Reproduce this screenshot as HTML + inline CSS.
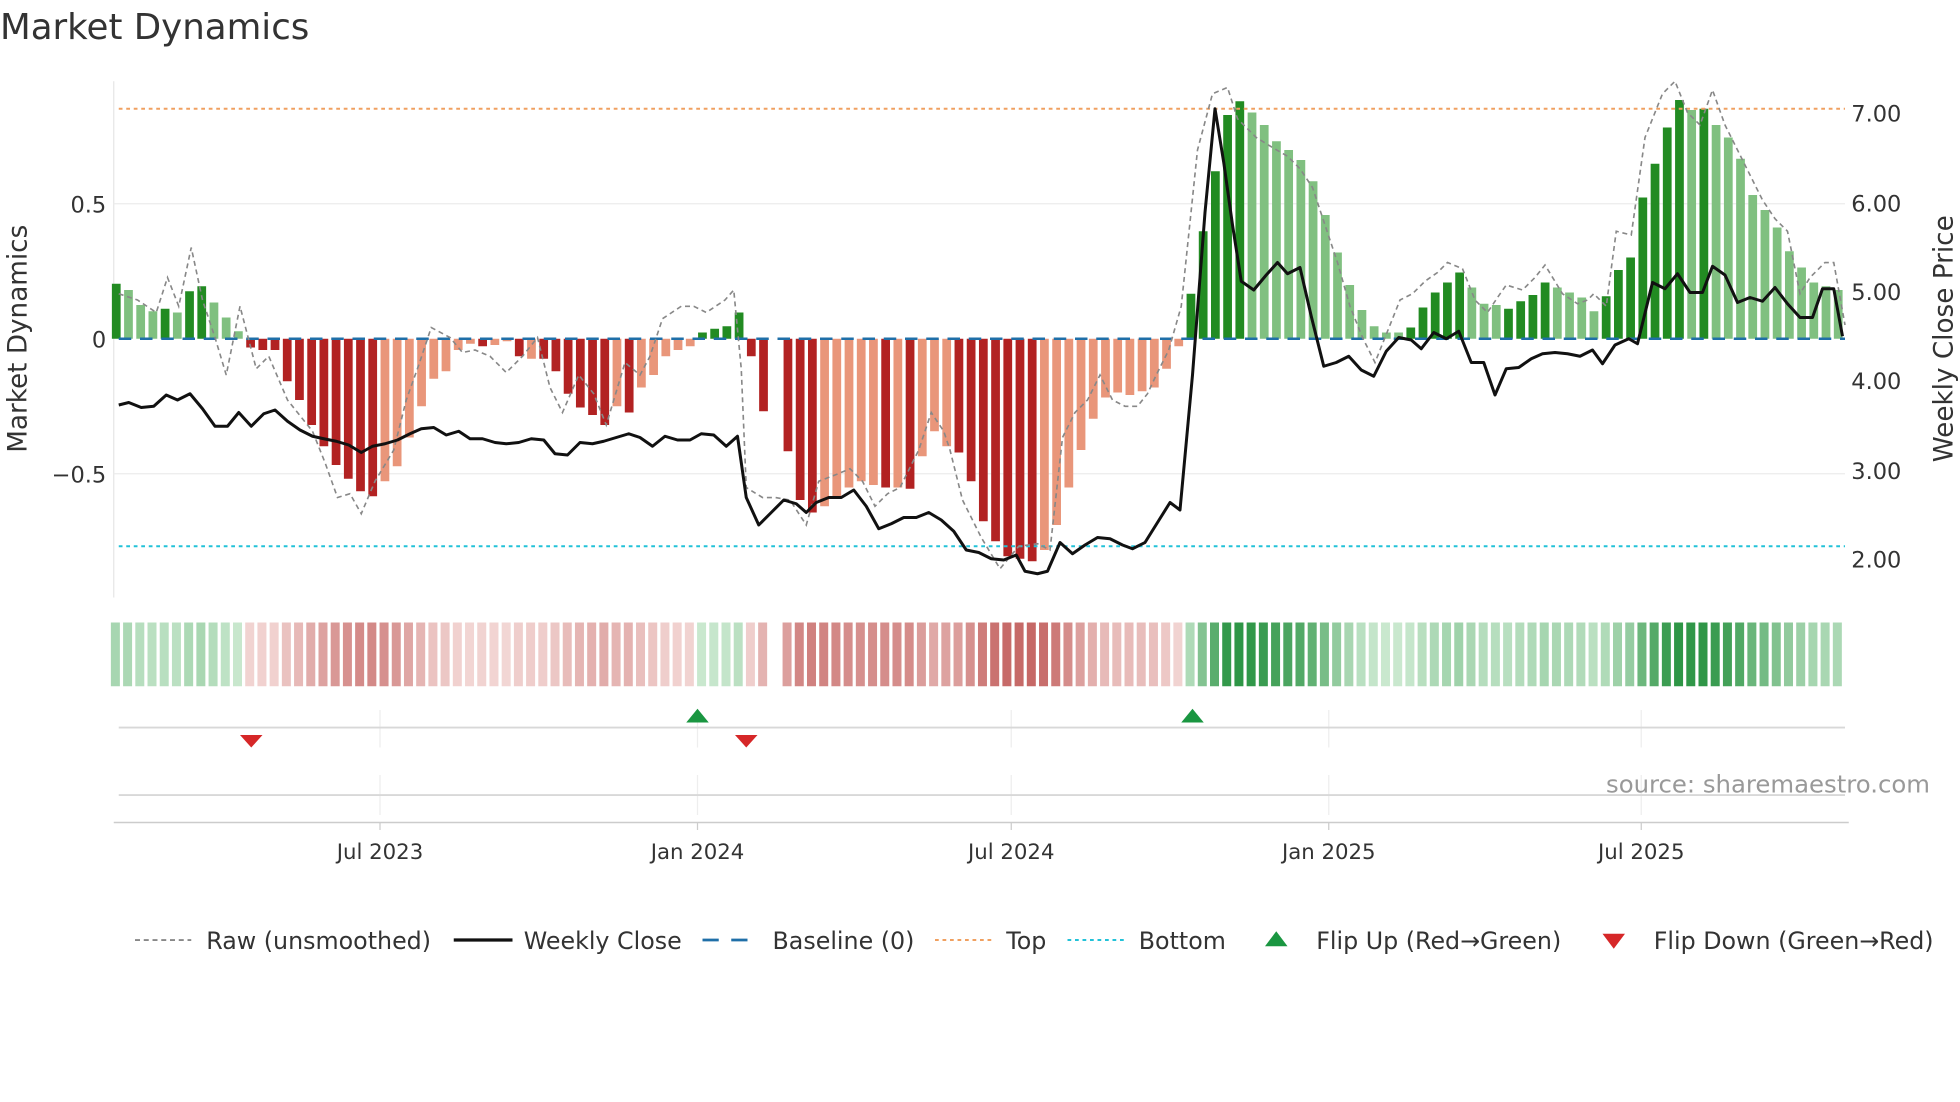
<!DOCTYPE html>
<html><head><meta charset="utf-8"><style>
html,body{margin:0;padding:0;background:#fff;width:1960px;height:1102px;overflow:hidden}
svg{display:block}
text{font-family:"DejaVu Sans","Liberation Sans",sans-serif;fill:#333}
</style></head><body>
<svg id="s" width="1960" height="1102" viewBox="0 0 1568 881.6" xmlns="http://www.w3.org/2000/svg">
<text x="0" y="31" font-size="28.5" fill="#333">Market Dynamics</text>
<line x1="91" y1="65" x2="91" y2="478" stroke="#e6e6e6"/>
<line x1="91" y1="163" x2="1476" y2="163" stroke="#ececec"/>
<line x1="91" y1="379" x2="1476" y2="379" stroke="#ececec"/>
<text x="85" y="170" font-size="18" text-anchor="end">0.5</text>
<text x="85" y="278" font-size="18" text-anchor="end">0</text>
<text x="85" y="386" font-size="18" text-anchor="end">−0.5</text>
<text x="1481" y="97" font-size="18">7.00</text>
<text x="1481" y="169" font-size="18">6.00</text>
<text x="1481" y="240" font-size="18">5.00</text>
<text x="1481" y="311" font-size="18">4.00</text>
<text x="1481" y="383" font-size="18">3.00</text>
<text x="1481" y="454" font-size="18">2.00</text>
<text transform="translate(21,271) rotate(-90)" font-size="21" text-anchor="middle">Market Dynamics</text>
<text transform="translate(1562,271) rotate(-90)" font-size="21" text-anchor="middle">Weekly Close Price</text>
<g id="bars"></g>
<line x1="95" y1="87" x2="1476" y2="87" stroke="#f0a060" stroke-width="1.6" stroke-dasharray="3,3"/>
<line x1="95" y1="437" x2="1476" y2="437" stroke="#22c2d8" stroke-width="1.6" stroke-dasharray="3,3"/>
<line x1="95" y1="271" x2="1476" y2="271" stroke="#1f6fa8" stroke-width="2" stroke-dasharray="10,7"/>
<polyline id="raw" fill="none" stroke="#888" stroke-width="1.3" stroke-dasharray="4,3"/>
<polyline id="close" fill="none" stroke="#111" stroke-width="2.4" stroke-linejoin="round"/>
<g id="strip"></g>
<g stroke="#eee">
<line x1="304" y1="568" x2="304" y2="598"/><line x1="558" y1="568" x2="558" y2="598"/><line x1="809" y1="568" x2="809" y2="598"/><line x1="1063" y1="568" x2="1063" y2="598"/><line x1="1313" y1="568" x2="1313" y2="598"/>
<line x1="304" y1="620" x2="304" y2="652"/><line x1="558" y1="620" x2="558" y2="652"/><line x1="809" y1="620" x2="809" y2="652"/><line x1="1063" y1="620" x2="1063" y2="652"/><line x1="1313" y1="620" x2="1313" y2="652"/>
</g>
<line x1="95" y1="582" x2="1476" y2="582" stroke="#d8d8d8" stroke-width="1.5"/>
<line x1="95" y1="636" x2="1476" y2="636" stroke="#d8d8d8" stroke-width="1.5"/>
<line x1="91" y1="658" x2="1479" y2="658" stroke="#ccc" stroke-width="1.2"/>
<g stroke="#ccc"><line x1="304" y1="658" x2="304" y2="664"/><line x1="558" y1="658" x2="558" y2="664"/><line x1="809" y1="658" x2="809" y2="664"/><line x1="1063" y1="658" x2="1063" y2="664"/><line x1="1313" y1="658" x2="1313" y2="664"/></g>
<polygon points="549,578 567,578 558,567" fill="#1a9641"/>
<polygon points="945,578 963,578 954,567" fill="#1a9641"/>
<polygon points="192,588 210,588 201,598" fill="#d62728"/>
<polygon points="588,588 606,588 597,598" fill="#d62728"/>
<text x="1544" y="634" font-size="19.5" text-anchor="end" style="fill:#999">source: sharemaestro.com</text>
<g font-size="17" text-anchor="middle">
<text x="304" y="687">Jul 2023</text><text x="558" y="687">Jan 2024</text><text x="809" y="687">Jul 2024</text><text x="1063" y="687">Jan 2025</text><text x="1313" y="687">Jul 2025</text>
</g>
<g font-size="19">
<line x1="108" y1="752" x2="153" y2="752" stroke="#888" stroke-width="1.5" stroke-dasharray="4,3"/>
<text x="165" y="759">Raw (unsmoothed)</text>
<line x1="363" y1="752" x2="410" y2="752" stroke="#111" stroke-width="2.6"/>
<text x="419" y="759">Weekly Close</text>
<line x1="562" y1="752" x2="608" y2="752" stroke="#1f6fa8" stroke-width="2.2" stroke-dasharray="13,10"/>
<text x="618" y="759">Baseline (0)</text>
<line x1="748" y1="752" x2="793" y2="752" stroke="#f0a060" stroke-width="1.6" stroke-dasharray="3,3"/>
<text x="805" y="759">Top</text>
<line x1="854" y1="752" x2="899" y2="752" stroke="#22c2d8" stroke-width="1.6" stroke-dasharray="3,3"/>
<text x="911" y="759">Bottom</text>
<polygon points="1012,757 1030,757 1021,745" fill="#1a9641"/>
<text x="1053" y="759">Flip Up (Red→Green)</text>
<polygon points="1282,747 1300,747 1291,759" fill="#d62728"/>
<text x="1323" y="759">Flip Down (Green→Red)</text>
</g>
</svg>
<script>
var d="44D 39L 27L 22L 24D 21L 38D 42D 29L 17L 6L -7R -9R -9R -34R -49R -69R -86R -101R -112R -122R -126R -114S -102S -79S -54S -32S -26S -9S -4S -6R -5S -2S -14R -16S -16R -26R -44R -55R -61R -69R -54S -59R -39S -29S -14S -9S -6S 5D 8D 10D 21D -14R -58R 0N -90R -129R -139R -134S -127S -119S -114S -117S -119R -119S -120R -94S -74S -86S -91R -114R -146R -162R -174R -176R -178R -169S -149S -119S -89S -64S -47S -43S -45S -42S -39S -24S -6S 36D 86D 134D 179D 190D 181L 171L 158L 151L 143L 126L 99L 69L 43L 23L 10L 5L 5L 9D 25D 37D 45D 53D 41L 28L 27L 24D 30D 35D 45D 41L 37L 33L 22L 34D 55D 65D 113D 140D 169D 191D 183L 184D 171L 161L 144L 115L 103L 89L 70L 57L 45L 42L 39L".split(" ");
var ns="http://www.w3.org/2000/svg",bars=document.getElementById("bars"),strip=document.getElementById("strip");
var col={D:"#228b22",L:"#80c080",R:"#b22222",S:"#e9967a"};
function mix(a,b,t){return "rgb("+[0,1,2].map(function(i){return Math.round(a[i]+(b[i]-a[i])*t)}).join(",")+")"}
d.forEach(function(s,i){var v=parseFloat(s),c=s.slice(-1),x=93+i*9.77;
 if(c!="N"){var r=document.createElementNS(ns,"rect");r.setAttribute("x",x-3.5);r.setAttribute("width",7);
 r.setAttribute("y",v>0?271-v:271);r.setAttribute("height",Math.max(Math.abs(v),1));r.setAttribute("fill",col[c]);bars.appendChild(r);
 var t=Math.min(Math.abs(v)/185,1),f;
 if(v>0)f=mix([205,234,210],[46,150,70],t);else f=mix([243,215,213],[196,100,98],t);
 var q=document.createElementNS(ns,"rect");q.setAttribute("x",x-4.3);q.setAttribute("width",7.2);q.setAttribute("y",498);q.setAttribute("height",51);q.setAttribute("fill",f);strip.appendChild(q);}
});
document.getElementById("close").setAttribute("points","95,324 103,322 113,326 123,325 133,316 142,320 152,315 162,327 172,341 182,341 191,330 201,341 211,331 220,328 230,337 240,344 250,349 259,351 269,353 279,356 289,362 298,357 308,355 318,352 328,347 337,343 347,342 357,348 367,345 376,351 386,351 396,354 405,355 415,354 425,351 435,352 444,363 454,364 464,354 474,355 483,353 493,350 503,347 512,350 522,357 532,349 542,352 552,352 561,347 571,348 581,357 590,349 597,398 607,420 617,410 627,400 637,403 645,410 653,402 663,398 673,398 683,392 693,405 703,423 713,419 723,414 733,414 743,410 753,416 763,425 773,440 783,442 793,447 803,448 813,444 820,457 830,459 838,457 848,434 858,443 868,436 878,430 888,431 898,436 906,439 916,434 926,418 936,402 944,408 954,300 964,170 972,87 979,130 986,180 993,225 1003,232 1013,220 1022,210 1030,219 1040,214 1049,253 1059,293 1069,290 1079,285 1089,296 1099,301 1109,281 1119,270 1129,272 1137,279 1147,266 1157,271 1167,265 1177,290 1187,290 1196,316 1205,295 1215,294 1225,287 1234,283 1244,282 1254,283 1264,285 1274,280 1282,291 1292,276 1303,271 1310,275 1322,226 1332,231 1342,219 1352,234 1362,234 1370,213 1380,220 1390,242 1400,238 1410,241 1420,230 1430,243 1440,254 1450,254 1458,231 1467,231 1474,269");
document.getElementById("raw").setAttribute("points","95,235 110,240 125,250 134,222 143,245 153,198 162,240 172,270 181,300 192,245 205,295 215,285 230,320 250,345 260,370 270,398 280,395 289,411 300,385 315,360 325,320 335,292 345,262 360,270 370,282 380,280 392,285 405,298 418,285 430,270 440,310 450,330 463,300 475,315 485,340 500,290 512,300 520,285 530,255 545,245 555,245 565,250 580,240 587,232 593,295 597,390 610,398 620,398 632,400 645,420 655,385 668,380 680,375 690,385 700,405 710,395 720,390 735,360 745,330 755,345 760,360 770,400 785,430 800,455 815,437 830,435 840,440 850,350 860,330 870,320 880,300 890,320 900,325 910,325 918,315 925,300 935,280 945,245 958,120 970,75 982,70 990,95 1005,110 1018,118 1030,125 1040,135 1050,150 1060,180 1070,210 1080,245 1090,270 1100,290 1110,265 1120,240 1130,235 1140,225 1150,218 1158,210 1170,215 1180,240 1190,250 1198,238 1205,228 1218,232 1228,222 1236,212 1250,235 1262,243 1270,240 1275,235 1285,245 1293,185 1305,188 1316,110 1330,75 1340,65 1350,90 1360,100 1370,72 1380,100 1390,120 1400,140 1410,160 1420,175 1430,185 1440,235 1448,222 1460,210 1467,210 1476,260");
</script>
</body></html>
